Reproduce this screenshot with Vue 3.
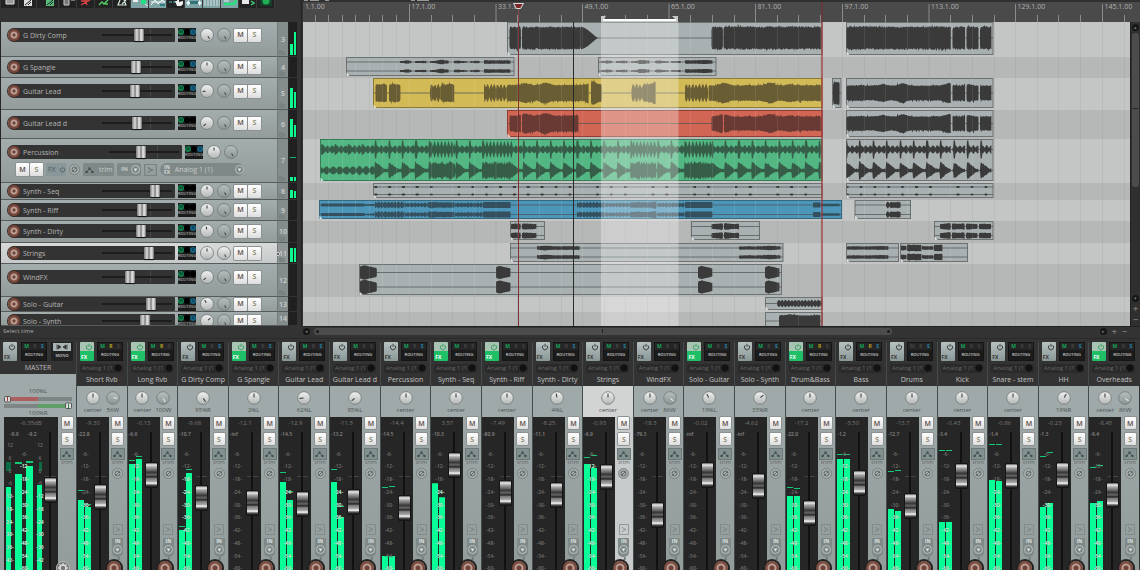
<script setup>
const tracks = [
  { n: 3, name: 'G Dirty Comp', h: 35, pad: 6, vol: 54, s: true, pan: 145, m: [22, 10], },
  { n: 4, name: 'G Spangle', h: 21, pad: 3, vol: 50, s: true, pan: 0 },
  { n: 5, name: 'Guitar Lead', h: 32, pad: 6, vol: 49, s: true, pan: -95, m: [10, 14] },
  { n: 6, name: 'Guitar Lead d', h: 29, pad: 6, vol: 51, s: false, pan: -130, m: [9, 15] },
  { n: 7, name: 'Percussion', h: 44, pad: 6, vol: 47, s: true, pan: 0, m: [38, 38], open: true, peak: 18 },
  { n: 8, name: 'Synth - Seq', h: 17, pad: 1, vol: 79, s: false, pan: 0, m: [7, 8] },
  { n: 9, name: 'Synth - Riff', h: 21, pad: 3, vol: 59, s: false, pan: 0 },
  { n: 10, name: 'Synth - Dirty', h: 22, pad: 3, vol: 57, s: true, pan: -10 },
  { n: 11, name: 'Strings', h: 21, pad: 3, vol: 70, s: true, pan: 0, m: [5, 5], sel: true },
  { n: 12, name: 'WindFX', h: 33, pad: 6, vol: 41, s: false, pan: -130 },
  { n: 13, name: 'Solo - Guitar', h: 15, pad: 0, vol: 72, s: true, pan: -30 },
  { n: 14, name: 'Solo - Synth', h: 14, pad: 2, vol: 63, s: true, pan: 50 },
]

const strips = [
  { name: 'Short Rvb', fx: 1, r: 'MR', pans: [[0, 'center'], [90, '56W']], vol: '-9.30', pk: '-22.8', f: 497, l: [500, 490], rt: [507, 504] },
  { name: 'Long Rvb', fx: 1, r: 'MR', pans: [[0, 'center'], [150, '100W']], vol: '-0.13', pk: '-6.6', f: 475, l: [464, 460], rt: [459, 456] },
  { name: 'G Dirty Comp', fx: 0, r: 'MS', pans: [[145, '95%R']], vol: '-9.68', pk: '-10.7', f: 498, l: [530, 526], rt: [473, 469] },
  { name: 'G Spangle', fx: 1, r: 'MS', pans: [[0, '2%L']], vol: '-12.1', pk: '-inf', f: 503 },
  { name: 'Guitar Lead', fx: 0, r: 'MS', pans: [[-95, '62%L']], vol: '-12.9', pk: '-14.5', f: 504, l: [482, 472], rt: [500, 491] },
  { name: 'Guitar Lead d', fx: 0, r: 'M', pans: [[-130, '85%L']], vol: '-11.5', pk: '-13.2', f: 502, l: [482, 469], rt: [517, 506] },
  { name: 'Percussion', fx: 0, r: 'MS', pans: [[0, 'center']], vol: '-14.4', pk: '-14.5', f: 508, l: [556, 487], rt: [556, 486] },
  { name: 'Synth - Seq', fx: 1, r: 'M', pans: [[0, 'center']], vol: '3.57', pk: '-10.3', f: 465, l: [483, 483], rt: [497, 497] },
  { name: 'Synth - Riff', fx: 1, r: 'M', pans: [[0, 'center']], vol: '-7.49', pk: '-80.9', f: 493 },
  { name: 'Synth - Dirty', fx: 0, r: 'MS', pans: [[-10, '4%L']], vol: '-8.25', pk: '-11.1', f: 495 },
  { name: 'Strings', fx: 0, r: 'MS', pans: [[0, 'center']], vol: '-0.93', pk: '-6.9', f: 477, l: [464, 457], rt: [468, 455], sel: true },
  { name: 'WindFX', fx: 0, r: 'M', pans: [[0, 'center'], [130, '86W']], vol: '-18.3', pk: '-79.3', f: 515 },
  { name: 'Solo - Guitar', fx: 1, r: 'MS', pans: [[-30, '19%L']], vol: '-0.02', pk: '-inf', f: 475 },
  { name: 'Solo - Synth', fx: 0, r: 'MS', pans: [[50, '33%R']], vol: '-4.62', pk: '-inf', f: 486 },
  { name: 'Drum&Bass', fx: 1, r: 'MR', pans: [[0, 'center']], vol: '-17.2', pk: '-22.0', f: 513, l: [496, 487], rt: [496, 488] },
  { name: 'Bass', fx: 0, r: 'MRS', pans: [[0, 'center']], vol: '-3.50', pk: '-1.2', f: 483, l: [459, 454], rt: [459, 454] },
  { name: 'Drums', fx: 0, r: 'S', pans: [[0, 'center']], vol: '-13.7', pk: '-12.7', f: 506, l: [509, 471], rt: [511, 470] },
  { name: 'Kick', fx: 0, r: 'M', pans: [[0, 'center']], vol: '-0.43', pk: '-3.4', f: 476, l: [522, 450], rt: [522, 450] },
  { name: 'Snare - stem', fx: 0, r: 'M', pans: [[0, 'center']], vol: '-0.86', pk: '-1.4', f: 476, l: [480, 444], rt: [481, 444] },
  { name: 'HH', fx: 0, r: 'MS', pans: [[30, '19%R']], vol: '-0.23', pk: '-1.3', f: 475, l: [507, 456], rt: [503, 452] },
  { name: 'Overheads', fx: 1, r: 'MS', pans: [[0, 'center'], [130, '86W']], vol: '-8.45', pk: '-9.4', f: 495, l: [503, 467], rt: [501, 465] },
]

const METER_TOP = 417
const scale = [6, 12, 18, 24, 30, 36, 42, 48, 54, 60].map((db, i) => ({ text: `-${db}-`, y: Math.round(453.5 + i * 12.77) - METER_TOP }))
const sideScale = ['12', '6', '0', '-6', '12', '18', '24', '30', '36', '42'].map((t, i) => ({ t, y: 28 + Math.round(i * 12.77) }))
const covered = (s, y) => s.l && y + METER_TOP >= Math.min(s.l[0], s.rt[0]) + 2

const AX = 303
const AW = 827
const pct = (x) => ((x - AX) / AW) * 100 + '%'
const majors = [409.5, 496, 582.5, 669, 755.5, 842.5, 929, 1015.5, 1102.5]
const labels = [[303, '1.1.00'], ...majors.map((x, i) => [x, `${17 + 16 * i}.1.00`])]
const minors = []
for (let i = 0; i < 7; i++) minors.push(315.5 + Math.round(i * 13.45))
majors.forEach((x) => [21.6, 43.3, 65].forEach((d) => x + d < 1130 && minors.push(Math.floor(x + d) + 0.5)))

const laneTop = [22]
tracks.forEach((t) => laneTop.push(laneTop[laneTop.length - 1] + t.h))

const rnd = (x) => {
  const v = Math.sin(x * 12.9898 + 4.1) * 43758.5453
  return v - Math.floor(v)
}
const busy = [[430, 455], [484, 512], [632, 656], [685, 712]]
const shapes = {
  solid: (x) => 0.78 + 0.14 * rnd(x) + (rnd(x + 9) > 0.93 ? 0.12 : 0),
  lumpy: (x) => 0.62 + 0.1 * rnd(x) + 0.28 * Math.pow(Math.abs(Math.sin(x / 7.1) * Math.cos(x / 19)), 3) + (rnd(x + 5) > 0.93 ? 0.16 : 0),
  pulse: (x) => 0.25 + 0.65 * Math.pow(Math.abs(Math.sin(x * 0.95)), 0.6) * (0.7 + 0.3 * rnd(x)),
  thin: (x) => 0.25 + 0.45 * Math.pow(Math.abs(Math.sin(x / 5.3)), 2) * rnd(x) + 0.25 * Math.abs(Math.cos(x / 13)),
  flat: () => 0.8,
  blob: (x, p) => (p < 0.25 ? 0.86 + p * 0.5 : 1 - (p - 0.25) * 0.55) + 0.06 * rnd(x),
  fade: (x, p) => Math.pow(Math.max(0, 1 - p * p), 0.9) * Math.pow(1 - p, 0.4),
  kit: (x) => {
    const p = ((x - 321) % 13.45) / 13.45
    const dense = busy.some(([a, b]) => x > a && x < b)
    if (dense) return 0.3 + 0.6 * Math.pow(Math.abs(Math.sin(x * 0.9)), 2)
    const hit = x > 372 ? (p < 0.14 ? 0.95 : 0) : (p < 0.14 ? 0.55 : 0)
    return Math.max(hit, 0.16 + 0.32 * Math.abs(Math.sin(p * 9.4)) * (0.6 + 0.4 * rnd(x)))
  },
  kick: (x) => {
    if (x < 374) return 0.15 + 0.35 * Math.abs(Math.sin(x / 2.1)) * (0.6 + 0.4 * rnd(x))
    const dense = busy.some(([a, b]) => x > a && x < b)
    const p = ((x - 321) % 13.45) / 13.45
    return dense ? 0.6 + 0.4 * rnd(x) : Math.max(0.12 + 0.1 * rnd(x), (1 - p * 1.15) * (0.8 + 0.25 * rnd(x)))
  },
  dots: (x) => (((x * 0.97) % 13.45) < 2.6 && rnd(Math.floor(x / 13.45)) > 0.2 ? 1 : 0.12),
}
function wave([x1, x2, amp, kind], cy, sub) {
  const top = []
  const bot = []
  for (let x = x1; x <= x2; x += 0.6) {
    const p = (x - x1) / (x2 - x1)
    const edge = Math.min(1, 0.75 + (x - x1) / 2, 0.7 + (x2 - x) / 1.5)
    const k = kind === 'kit' && sub ? 'kick' : kind
    const a = amp * shapes[k](x, p) * (k === 'fade' ? 1 : edge)
    const b = amp * shapes[k](x + (k === 'solid' || k === 'lumpy' ? 0.3 : 0), p) * (k === 'fade' ? 1 : edge)
    top.push(`${x.toFixed(1)} ${(cy - a).toFixed(1)}`)
    bot.unshift(`${x.toFixed(1)} ${(cy + b).toFixed(1)}`)
  }
  return 'M' + top.concat(bot).join('L') + 'Z'
}
const G = 'grey'
const tail = (amp, kind) => [[846.5, 951.5, amp, kind], [952.5, 965.5, amp, kind], [966.5, 978.8, amp, kind], [980, 992, amp, kind]]
const spangle = (o, end) => [[o, o + 12, 2, 'thin'], [o + 15, o + 27, 2, 'thin'], [o + 30, o + 49, 2.8, 'thin'], [o + 54, o + 68, 2, 'thin'], [o + 70, o + 80, 2, 'thin'], [o + 84, end, 2.5, 'lumpy']]
const riff = [[321, 365, 1.8, 'flat'], [365, 375, 1.6, 'thin'], [375, 405, 4, 'pulse'], [405, 428, 2.8, 'pulse'], [428, 455, 3.8, 'lumpy'], [455, 483, 3, 'pulse'], [483, 511, 3.6, 'flat'], [577, 605, 3.6, 'pulse'], [605, 630, 2.8, 'pulse'], [630, 657, 3.8, 'lumpy'], [657, 685, 2.8, 'pulse'], [685, 713, 3.6, 'flat'], [813, 821, 3.2, 'flat'], [821, 840, 1.6, 'flat']]
const clips = [
  { x: 507.5, e: 822, y: 22.5, b: 54.5, c: G, cy: [38], w: [[509.5, 521, 13, 'solid'], [522, 581, 13, 'solid'], [581, 598, 11.5, 'fade'], [711.5, 723, 13, 'solid'], [723.5, 821.5, 13, 'solid']] },
  { x: 846.5, e: 993, y: 22.5, b: 54.5, c: G, cy: [38], w: tail(13, 'solid') },
  { x: 346.5, e: 514, y: 57.5, b: 75.5, c: G, cy: [62, 71], w: spangle(400, 511) },
  { x: 598.5, e: 716, y: 57.5, b: 75.5, c: G, cy: [62, 71], w: spangle(601, 713) },
  { x: 373.5, e: 822, y: 78.5, b: 107.5, c: 'yellow', cy: [93], w: [[375.5, 387, 13, 'lumpy'], [389, 400.5, 13, 'lumpy'], [430, 441, 11, 'pulse'], [441, 454.5, 13, 'lumpy'], [484, 507, 11, 'pulse'], [507, 589, 12, 'lumpy'], [591, 602, 13, 'lumpy'], [631.5, 643, 11, 'pulse'], [643, 656, 13, 'lumpy'], [685, 709, 11, 'pulse'], [709, 821.5, 11.5, 'lumpy']] },
  { x: 832.5, e: 841, y: 78.5, b: 107.5, c: G, cy: [93], w: [[833, 840, 12, 'lumpy']] },
  { x: 846.5, e: 993, y: 78.5, b: 107.5, c: G, cy: [93], w: tail(11, 'lumpy') },
  { x: 507.5, e: 822, y: 110.5, b: 136.5, c: 'red', cy: [123.5], w: [[509.5, 521.5, 12, 'lumpy'], [522, 579, 12, 'lumpy'], [711.5, 723, 11, 'lumpy'], [724, 821.5, 10.5, 'lumpy']] },
  { x: 846.5, e: 993, y: 110.5, b: 136.5, c: G, cy: [123.5], w: tail(10.5, 'lumpy') },
  { x: 320.5, e: 822, y: 139.5, b: 180.5, c: 'green', cy: [149.5, 170.5], w: [[321, 821.5, 9.5, 'kit']] },
  { x: 846.5, e: 993, y: 139.5, b: 180.5, c: G, cy: [149.5, 170.5], w: tail(9.5, 'kit') },
  { x: 373.5, e: 822, y: 183.5, b: 197.5, c: G, cy: [187, 194.5], w: [[374, 821, 1, 'dots']] },
  { x: 846.5, e: 993, y: 183.5, b: 197.5, c: G, cy: [187, 194.5], w: [[847, 992, 1, 'dots']] },
  { x: 319.5, e: 841.5, y: 200.5, b: 218.5, c: 'blue', cy: [205, 214.5], w: riff },
  { x: 855, e: 910.5, y: 200.5, b: 218.5, c: G, cy: [205, 214.5], w: [[886, 901, 4, 'pulse'], [891, 901, 3.4, 'flat']] },
  { x: 510.5, e: 544.5, y: 221.5, b: 239.5, c: G, cy: [226.5, 235.5], w: [[511, 521, 4, 'lumpy'], [522, 537, 3.6, 'lumpy']] },
  { x: 691.5, e: 759.5, y: 221.5, b: 239.5, c: G, cy: [226.5, 235.5], w: [[711.5, 723, 3.8, 'lumpy'], [724, 739.5, 3.8, 'lumpy']] },
  { x: 934.5, e: 993, y: 221.5, b: 239.5, c: G, cy: [226.5, 235.5], w: [[940, 951, 3.6, 'lumpy'], [952, 965, 4, 'lumpy'], [966, 978, 3.6, 'lumpy'], [979, 991.5, 4, 'lumpy']] },
  { x: 510.5, e: 783, y: 243.5, b: 261.5, c: G, cy: [248, 257], w: [[537, 580, 2.6, 'lumpy'], [739, 781, 2.4, 'lumpy']] },
  { x: 846.5, e: 898.5, y: 243.5, b: 261.5, c: G, cy: [248, 257], w: [[847, 889, 2.4, 'lumpy']] },
  { x: 900.5, e: 967.5, y: 243.5, b: 261.5, c: G, cy: [248, 257], w: [[901, 907, 2.6, 'lumpy'], [907, 922, 4.6, 'lumpy'], [922, 934, 2.6, 'lumpy'], [934, 943, 4.6, 'lumpy']] },
  { x: 359.5, e: 781.5, y: 264.5, b: 294.5, c: G, cy: [272.5, 287], w: [[360, 377, 7, 'blob'], [496, 511, 6.4, 'blob'], [698, 713, 6.4, 'blob'], [765, 780, 6.4, 'blob']] },
  { x: 765.5, e: 822, y: 297.5, b: 309.5, c: G, cy: [303.5], w: [[777, 822, 4.4, 'pulse'], [777, 822, 2.6, 'lumpy']] },
  { x: 765.5, e: 822, y: 312.5, b: 330, c: G, cy: [321], w: [[779, 821, 8.5, 'lumpy']] },
].map((c) => ({ ...c, d: c.cy.map((y, i) => c.w.map((w) => wave(w, y, i)).join('')).join('') }))

const tools = ['stop', 'sheet', 'gap', 'sheetg', 'page', 'cutr', 'cutg', 'metro', 'on:group', 'on:env', 'hand', 'on:loop', 'on:grid', 'on:snap', 'lock', 'glow']
const toolIcon = (t) => t.replace('on:', '')
const px = (v) => v + 'px'
</script>

<template>
  <div class="daw">
    <svg class="defs" aria-hidden="true">
      <defs>
        <linearGradient id="kg" x1="0" y1="0" x2="0" y2="1"><stop offset="0" stop-color="#f2f3f2" /><stop offset="1" stop-color="#b2b6b5" /></linearGradient>
        <linearGradient id="kd" x1="0" y1="0" x2="0" y2="1"><stop offset="0" stop-color="#b7bfbf" /><stop offset="1" stop-color="#8b9493" /></linearGradient>
      </defs>
      <symbol id="i-stop" viewBox="0 0 18 9"><path d="M5 0v4h8V0" fill="#999" stroke="#ddd" /></symbol>
      <symbol id="i-sheet" viewBox="0 0 18 9"><path d="M5 0h8v6H5z" fill="#ddd" /><path d="M6 5l6-5M9 5l3-3" stroke="#222" /></symbol>
      <symbol id="i-sheetg" viewBox="0 0 18 9"><path d="M5 0h8v6H5z" fill="#58bb78" /><path d="M6 5l6-5M9 5l3-3" stroke="#123" /></symbol>
      <symbol id="i-page" viewBox="0 0 18 9"><path d="M5 0v5h5V0M12 0h4" fill="#777" stroke="#ccc" /></symbol>
      <symbol id="i-cutr" viewBox="0 0 18 9"><path d="M4 5l9-5M4 1h7M8 0l2 5" stroke="#d44" stroke-width="1.4" fill="none" /></symbol>
      <symbol id="i-cutg" viewBox="0 0 18 9"><path d="M4 5l3-3 2 2 4-4M10 4l3 0" stroke="#5c6" stroke-width="1.4" fill="none" /></symbol>
      <symbol id="i-metro" viewBox="0 0 18 9"><path d="M7 0L5 5h8L11 0M9 4l4-4" stroke="#d5e8d8" stroke-width="1.2" fill="none" /></symbol>
      <symbol id="i-group" viewBox="0 0 18 9"><path d="M2 0h5v2H2z" fill="#eee" /><path d="M6 1l4 3V0h5v4h-5" fill="#1fe083" /><path d="M14 4l3 2" stroke="#eee" /></symbol>
      <symbol id="i-env" viewBox="0 0 18 9"><path d="M2 5l4-5 3 4 4-4 3 2M2 2h14" stroke="#f4f8f8" fill="none" /><path d="M11 4h5v2h-5z" fill="#2e7d83" /></symbol>
      <symbol id="i-hand" viewBox="0 0 18 9"><path d="M2 1h3v2H2zM6 1h3v2H6z" fill="#356e73" /><path d="M8 1h2V0h2v2l4-1v3l-2 2h-4z" fill="#eee" /></symbol>
      <symbol id="i-loop" viewBox="0 0 18 9"><path d="M1 3l3-3v2h10V0l3 3-3 3V4H4v2z" fill="#e8f4f4" /><path d="M5 1h8v3H5z" fill="#2d7579" /></symbol>
      <symbol id="i-grid" viewBox="0 0 18 9"><path d="M2 0v6M5 0v6M8 0v6M11 0v6M14 0v6M17 0v6" stroke="#d9e4e4" /></symbol>
      <symbol id="i-snap" viewBox="0 0 18 9"><path d="M3 4h8q4 0 4-4" stroke="#25e27f" stroke-width="2.4" fill="none" /><path d="M3 1h5" stroke="#e6f2ee" /></symbol>
      <symbol id="i-lock" viewBox="0 0 18 9"><path d="M3 0h7v4H3z" fill="#e8e8e8" /><path d="M12 1l3 2-3 2" stroke="#3fce75" stroke-width="1.5" fill="none" /></symbol>
      <symbol id="i-glow" viewBox="0 0 18 9"><path d="M3 0h12v6H3z" fill="#173e26" /><circle cx="9" cy="1" r="3.5" fill="#20b055" /></symbol>
      <symbol id="i-env2" viewBox="0 0 11 10"><path d="M2.5 7L5.5 3.5 8.5 7" stroke="#39494b" fill="none" stroke-width=".8" /><path d="M1.5 6h2v2h-2zM4.5 2.500h2v2h-2zM7.500 6h2v2h-2z" fill="#39494b" /></symbol>
      <symbol id="i-phase" viewBox="0 0 11 11"><circle cx="5.5" cy="5.5" r="5" fill="#a9b0af" stroke="#6f7877" stroke-width=".8" /><circle cx="5.5" cy="5.5" r="2.5" fill="none" stroke="#555c5c" stroke-width=".9" /><path d="M3.3 7.700L7.700 3.300" stroke="#555c5c" stroke-width=".8" /></symbol>
      <symbol id="i-ifx" viewBox="0 0 10 11"><path d="M.5.5h9v10h-9z" fill="none" stroke="#7a8483" /><path d="M3 3q1 2 4 2.500Q4 6 3 8" fill="none" stroke="#707978" /></symbol>
      <symbol id="i-power" viewBox="0 0 8 8"><path d="M2.400 2.200a2.600 2.600 0 1 0 3.200 0M4 .8v3" fill="none" stroke="currentColor" stroke-width=".9" /></symbol>
      <symbol id="i-folder" viewBox="0 0 6 5"><path d="M.5.5h2l.5 1h2.500v3h-5z" fill="#7a8382" stroke="#6f7877" stroke-width=".5" /></symbol>
      <symbol id="i-drop" viewBox="0 0 9 9"><circle cx="4.5" cy="4.5" r="4" fill="#7c8685" stroke="#ccd1d0" stroke-width=".8" /><path d="M2.600 3.500h3.800L4.500 6.500z" fill="#e0e4e3" /></symbol>
      <symbol id="i-gear" viewBox="0 0 14 14"><circle cx="7" cy="7" r="6.500" fill="#777" stroke="#bbb" /><circle cx="7" cy="7" r="3" fill="#777" stroke="#ddd" stroke-width="1.500" /><path d="M7 2v2M7 10v2M2 7h2M10 7h2M3.500 3.500l1.500 1.500M9 9l1.500 1.500M10.500 3.500L9 5M3.500 10.500L5 9" stroke="#ddd" stroke-width="1.300" /></symbol>
    </svg>

    <main class="arrange">
      <section class="side" aria-label="Track panel">
        <div class="toolbar">
          <template v-for="(t, i) in tools" :key="i">
            <span v-if="t === 'gap'" class="tgap"></span>
            <button v-else class="tool" :class="{ on: t.startsWith('on:') }" :aria-label="toolIcon(t)"><svg width="18" height="9"><use :href="'#i-' + toolIcon(t)" /></svg></button>
          </template>
        </div>
        <article v-for="t in tracks" :key="t.n" class="track" :class="{ sel: t.sel, open: t.open }" :style="{ height: px(t.h) }">
          <div class="tbody" :style="{ paddingTop: px(t.pad) }">
            <div class="tline">
              <div class="namebox">
                <button class="rec" :aria-label="'Arm ' + t.name"></button>
                <span class="tname">{{ t.name }}</span>
                <input type="range" class="hfader" min="0" max="100" :value="t.vol" :aria-label="t.name + ' volume'" />
              </div>
              <button class="route" :aria-label="t.name + ' routing'">
                <span class="dots"><i class="dm">M</i><i></i><i :class="{ ds: t.s }">{{ t.s ? 'S' : '' }}</i></span>
                <span class="rt">ROUTING</span>
              </button>
              <svg class="knob" viewBox="0 0 14 14" role="img" aria-label="Pan"><circle cx="7" cy="7" r="6.5" fill="url(#kg)" stroke="#6f7776" stroke-width=".8" /><path d="M7 2.500V5.500" stroke="#333" :transform="`rotate(${t.pan} 7 7)`" /></svg>
              <svg class="knob" viewBox="0 0 14 14" role="img" aria-label="Width"><circle cx="7" cy="7" r="6.5" :fill="t.sel ? 'url(#kg)' : 'url(#kd)'" stroke="#6f7776" stroke-width=".8" /><path d="M7 2.500V5.500" stroke="#444" transform="rotate(155 7 7)" /></svg>
              <div v-if="!t.open" class="ms"><button class="mb">M</button><button class="sb">S</button></div>
            </div>
            <div v-if="t.open" class="tline2">
              <div class="ms"><button class="mb">M</button><button class="sb">S</button></div>
              <button class="pill fxp">FX <svg width="7" height="7"><use href="#i-power" /></svg></button>
              <svg width="11" height="11"><use href="#i-phase" /></svg>
              <button class="pill trimp"><svg width="11" height="10"><use href="#i-env2" /></svg><span>trim</span></button>
              <button class="pill inp">IN <svg width="9" height="9"><use href="#i-drop" /></svg></button>
              <svg width="13" height="12" viewBox="0 0 10 11" preserveAspectRatio="none"><use href="#i-ifx" /></svg>
              <div class="pill anp"><span class="infx">IN<br />FX</span><select aria-label="Input"><option>Analog 1 (1)</option></select><svg width="9" height="9"><use href="#i-drop" /></svg></div>
            </div>
          </div>
          <div class="tnum"><span>{{ t.n }}</span><svg v-if="t.h > 16" class="fold" width="6" height="5"><use href="#i-folder" /></svg></div>
          <div class="tmeter">
            <template v-if="t.m">
              <i v-for="(m, k) in t.m" :key="k" :style="{ marginTop: px(m) }"></i>
              <b v-if="t.peak" :style="{ top: px(t.peak) }"></b>
            </template>
          </div>
        </article>
      </section>

      <section class="timeline" aria-label="Arrangement">
        <div class="ruler">
          <div class="rinner">
            <svg viewBox="303 0 827 22" preserveAspectRatio="none">
              <path d="M304 0h4v1h-4zM310 0h9v1h-9zM325 0h4v1h-4zM411 0h4v1h-4zM417 0h12v1h-12z" fill="#999" />
              <path v-for="x in majors" :key="x" :d="`M${x} 4v18`" stroke="#8b8b8b" />
              <path v-for="x in minors" :key="x" :d="`M${x} 15v7`" stroke="#8b8b8b" />
              <path d="M601 16h5l-3 4h73l-4-4h6v6h-77z" fill="#c6c8c7" /><path d="M603 19h73v2h-73z" fill="#fff" />
              <path d="M822 2v20" stroke="#7a2a2a" />
            </svg>
            <span v-for="l in labels" :key="l[1]" class="rl" :style="{ left: pct(l[0]) }">{{ l[1] }}</span>
            <svg class="edit" :style="{ left: pct(513) }" width="11" height="22" viewBox="513 0 11 22"><path d="M518.500 8v14" stroke="#8d4a4a" /><path d="M513.500 3.500h10l-3 5h-4z" fill="#7c2626" stroke="#ddd" /></svg>
          </div>
        </div>
        <svg class="canvas" viewBox="303 22 827 304" preserveAspectRatio="none">
          <rect v-for="(t, i) in tracks" :key="t.n" x="303" :y="laneTop[i]" width="827" :height="t.h" :fill="i % 2 ? '#b6b8b7' : '#c4c6c5'" />
          <path v-for="x in majors.concat(minors)" :key="x" :d="`M${x} 22V326`" stroke="#000" stroke-opacity=".08" />
          <g v-for="(c, i) in clips" :key="i" :class="'c-' + c.c">
            <rect class="cb" :x="c.x" :y="c.y" :width="c.e - c.x" :height="c.b - c.y" />
            <path v-for="y in c.cy" :key="y" class="cl" :d="`M${c.x} ${y}H${c.e}`" />
            <path class="cw" :d="c.d" />
            <path :d="`M${c.x} ${c.b - 3}l3 3.500h-3z`" fill="#fff" fill-opacity=".75" />
          </g>
          <path v-for="x in majors.concat(minors)" :key="'o' + x" :d="`M${x} 22V326`" stroke="#fff" stroke-opacity=".09" />
          <rect x="601" y="22" width="77.500" height="304" fill="#fff" fill-opacity=".3" />
          <path d="M518.500 22V326" stroke="#7e2f2f" />
          <path d="M573.500 22V326" stroke="#2a2a2a" />
          <path d="M822 22V326" stroke="#a03030" stroke-width="1.200" />
        </svg>
      </section>
      <div class="vscroll">
        <i class="dot">▴</i><span class="vthumb"></span><i class="dot">▾</i><b>+</b><b>−</b>
      </div>
    </main>

    <div class="status">
      <span class="msg">Select time</span>
      <div class="hscroll"><i class="dot">◂</i><span class="hthumb"><i></i><u></u><i></i></span><span class="hend"><i class="dot">▸</i><b>+</b><b>−</b></span></div>
    </div>

    <section class="mixer" aria-label="Mixer">
      <article class="master">
        <div class="mhead">
          <button class="fx" aria-label="Master FX"><svg width="8" height="8"><use href="#i-power" /></svg><span>FX</span></button>
          <button class="routing"><span class="mrs"><i class="M">M</i><i>R</i><i class="S">S</i></span><span class="rtx">ROUTING</span></button>
          <button class="mono"><svg width="18" height="8" viewBox="0 0 18 8"><path d="M0 0h18v8H0z" fill="#a9b5b5" /><path d="M4 1.500v5M14 1.500v5M5 2l3 2-3 2zM13 2l-3 2 3 2z" stroke="#333" stroke-width=".8" fill="#333" /></svg><span>MONO</span></button>
        </div>
        <h2 class="mtitle">MASTER</h2>
        <div class="mpan">
          <span>100%L</span>
          <svg viewBox="0 0 68 13" height="13" preserveAspectRatio="none"><path d="M0 1h68v4H0zM0 8h68v4H0z" fill="#7d8685" /><path d="M5 1h29v4H5z" fill="#a9605e" /><path d="M34 8h29v4H34z" fill="#5f9e66" /><rect x=".5" y=".5" width="6" height="5.500" rx="1" fill="#ddd" stroke="#555" /><path d="M3.500 1v4" stroke="#a33" /><rect x="61.500" y="7" width="6" height="5.500" rx="1" fill="#ddd" stroke="#555" /><path d="M64.500 8v4" stroke="#384" /></svg>
          <span>100%R</span>
        </div>
        <div class="body">
          <div class="well">
            <span class="vol">-6.35dB</span>
            <span class="pk">-9.9</span><span class="pk pk2">-9.2</span>
            <i class="bar b1" :style="{ top: px(70) }"></i><i class="bar b2" :style="{ top: px(57) }"></i><i class="bar b3" :style="{ top: px(49) }"></i><i class="bar b4" :style="{ top: px(68) }"></i>
            <i class="led l1"></i><i class="led l2"></i>
            <i class="peak b2" :style="{ top: px(45) }"></i><i class="peak b3" :style="{ top: px(44) }"></i>
            <span v-for="s in scale" :key="s.y" class="sc" :class="{ lit: s.y > 46 }" :style="{ top: px(s.y - 4) }">{{ s.text }}</span>
            <template v-for="s in sideScale" :key="'s' + s.y">
              <span class="sc scl" :class="{ lit: s.y > 70 }" :style="{ top: px(s.y - 4) }">{{ s.t }}{{ s.y > 70 ? '-' : '' }}</span>
              <span class="sc scr" :class="{ lit: s.y > 70 }" :style="{ top: px(s.y - 4) }">{{ s.y > 70 ? '-' : '' }}{{ s.t }}</span>
            </template>
            <input type="range" class="vfader" min="443" max="565" value="490" aria-label="Master volume" />
          </div>
          <div class="col">
            <button class="mb">M</button><button class="sb">S</button>
            <button class="envb" aria-label="Envelope"><svg width="11" height="10"><use href="#i-env2" /></svg></button><span class="trim">trim</span>
          </div>
          <svg class="gear" width="14" height="14"><use href="#i-gear" /></svg>
        </div>
      </article>

      <div class="strips">
        <article v-for="s in strips" :key="s.name" class="strip" :class="{ sel: s.sel }">
          <div class="head">
            <button class="fx" :class="{ on: s.fx }" :aria-label="s.name + ' FX'"><svg width="8" height="8"><use href="#i-power" /></svg><span>FX</span></button>
            <button class="routing"><span class="mrs"><i v-for="c in 'MRS'" :key="c" :class="{ [c]: s.r.includes(c) }">{{ c }}</i></span><span class="rtx">ROUTING</span></button>
          </div>
          <div class="inrow"><select :aria-label="s.name + ' input'"><option>Analog 1 (1</option></select></div>
          <h2>{{ s.name }}</h2>
          <div class="pans">
            <div v-for="p in s.pans" :key="p[1]" class="pan">
              <svg class="knob" viewBox="0 0 14 14" role="img" :aria-label="s.name + ' pan'"><circle cx="7" cy="7" r="6.3" :fill="p[1].endsWith('W') ? 'url(#kd)' : 'url(#kg)'" stroke="#6f7776" stroke-width=".8" /><path d="M7 2.500V6.500" :stroke="p[1].endsWith('W') ? '#eee' : '#333'" :transform="`rotate(${p[0]} 7 7)`" /></svg>
              <span>{{ p[1] }}</span>
            </div>
          </div>
          <div class="body">
            <div class="well">
              <span class="vol">{{ s.vol }}</span><span class="pk">{{ s.pk }}</span>
              <template v-if="s.l">
                <i class="bar bl" :style="{ top: px(s.l[0] - METER_TOP) }"></i><i class="bar br" :style="{ top: px(s.rt[0] - METER_TOP) }"></i>
                <i class="peak bl" :style="{ top: px(s.l[1] - METER_TOP) }"></i><i class="peak br" :style="{ top: px(s.rt[1] - METER_TOP) }"></i>
              </template>
              <span v-for="k in scale" :key="k.y" class="sc" :class="{ lit: covered(s, k.y) }" :style="{ top: px(k.y - 4) }">{{ k.text }}</span>
              <input type="range" class="vfader" min="443" max="565" :value="s.f" :aria-label="s.name + ' volume'" />
            </div>
            <div class="col">
              <button class="mb">M</button><button class="sb">S</button>
              <button class="envb" aria-label="Envelope"><svg width="11" height="10"><use href="#i-env2" /></svg></button><span class="trim">trim</span>
              <svg class="phase" width="11" height="11"><use href="#i-phase" /></svg>
              <svg class="ifx" width="10" height="11"><use href="#i-ifx" /></svg>
              <button class="inb">IN<svg width="9" height="9"><use href="#i-drop" /></svg></button>
              <svg width="6" height="6" viewBox="0 0 6 6"><path d="M4 0v2L2 4v2" stroke="#6d7675" stroke-width="1.500" fill="none" /></svg>
            </div>
            <button class="rec big" :aria-label="'Arm ' + s.name"></button>
          </div>
        </article>
      </div>
    </section>
  </div>
</template>

<style>
html, body { margin: 0; background: #333; }
</style>

<style scoped>
.daw { height: 100vh; overflow: hidden; display: flex; flex-direction: column; background: #333; font: 7px/9px "Open Sans", "Noto Sans", sans-serif; color: #aaa; }
.daw * { box-sizing: border-box; }
.defs { position: absolute; width: 0; height: 0; }
button, select { font: inherit; border: 0; padding: 0; margin: 0; color: inherit; background: none; }
i, u { font-style: normal; text-decoration: none; }
h2 { margin: 0; font-weight: 400; font-size: 7px; line-height: 9px; }
svg { display: block; flex: none; }

.arrange { display: flex; flex: none; }
.side { width: 302px; flex: none; border-right: 1px solid #222; height: 326px; overflow: hidden; }
.toolbar { height: 22px; padding-left: 1px; display: flex; align-items: flex-start; }
.tool { width: 18px; height: 8px; overflow: hidden; background: #222; border-right: 1px solid #3a3a3a; }
.tool.on { background: #7fa3a5; }
.tgap { width: 4px; height: 8px; background: #222; }

.track { display: flex; width: 297px; overflow: hidden; background: #262626; }
.tbody { width: 276px; margin-left: 1px; background: linear-gradient(#a3adad, #939c9b); border-bottom: 1px solid #555c5b; overflow: hidden; }
.sel .tbody { background: linear-gradient(#d8dada, #c6c9c9); }
.tline { display: flex; align-items: center; height: 14px; padding-left: 8px; }
.namebox { width: 166px; height: 14px; background: #333; display: flex; align-items: center; margin-right: 3px; border-radius: 6px 1px 1px 6px; flex: none; }
.open .namebox { width: 173px; }
.rec { width: 12px; height: 12px; border-radius: 50%; background: radial-gradient(circle, #6e4236 0 1px, #b99c92 2px 3px, #76473a 4px); box-shadow: 0 0 0 1px #3a2a26; margin-left: -1px; flex: none; }
.tname { margin-left: 3px; flex: 1; color: #b5b5b5; white-space: nowrap; }
.hfader { appearance: none; width: 76px; height: 14px; margin: 0 1px 0 0; background: linear-gradient(#1d1d1d, #1d1d1d) 4px 6px / 70px 2px no-repeat, linear-gradient(#484848, #484848) 52px 1px / 1px 12px no-repeat; outline: 0; }
.hfader::-webkit-slider-thumb { appearance: none; width: 10px; height: 12px; border-radius: 1px; background: linear-gradient(90deg, #777, #ddd 30%, #999 45%, #333 50%, #ccc 58%, #ddd 80%, #666); box-shadow: 0 1px 1px #111; }
.route { width: 18px; height: 14px; background: #1c1c1c; display: flex; flex-direction: column; align-items: center; overflow: hidden; flex: none; margin-right: 4px; }
.dots { display: flex; gap: 0; height: 7px; padding-top: 1px; }
.dots i { width: 6px; height: 6px; border-radius: 50%; background: #000; font-size: 4px; line-height: 6px; text-align: center; color: #012; }
.dots .dm { background: #12804a; }
.dots .ds { background: #16607f; }
.rt { font-size: 4px; line-height: 6px; font-weight: 600; color: #aaa; }
.knob { width: 14px; height: 14px; margin-right: 3px; }
.ms { display: flex; gap: 1px; }
.mb, .sb { width: 13px; height: 13px; background: linear-gradient(#fff, #dedede); border-radius: 1px; color: #5a4a46; font-size: 7px; line-height: 12px; font-weight: 600; text-align: center; box-shadow: 0 0 0 1px #8b9291; }
.sb { color: #7b7d58; }
.tline2 { display: flex; align-items: center; gap: 3px; height: 13px; padding-left: 15px; margin-top: 4px; }
.pill { background: #7f8988; height: 13px; display: flex; align-items: center; color: #c6cbca; border-radius: 1px; gap: 2px; }
.fxp { width: 20px; padding-left: 2px; color: #4e5859; background: #87979a; gap: 3px; }
.trimp { width: 31px; padding-left: 1px; gap: 4px; }
.inp { width: 24px; padding-left: 4px; border-radius: 2px; font-weight: 700; font-size: 6px; gap: 3px; }
.anp { width: 84px; border-radius: 7px; padding-left: 4px; }
.anp select { appearance: none; width: 60px; height: 12px; line-height: 12px; }
.infx { font-size: 5px; line-height: 5px; width: 9px; color: #d5dada; font-weight: 700; }
.tnum { width: 11px; background: #848d8c; border-bottom: 1px solid #555c5b; border-left: 1px solid #737b7a; color: #cdd1d0; display: flex; flex-direction: column; align-items: center; justify-content: center; position: relative; font-weight: 600; margin-right: 1px; }
.sel .tnum { background: #8f9695; }
.sel .tnum::before { content: ""; position: absolute; left: -2px; top: 9px; width: 2px; height: 2px; border: 1px solid #ddd; border-radius: 50%; background: #333; box-sizing: content-box; }
.fold { position: absolute; bottom: 1px; right: 3px; }
.tmeter { width: 8px; background: #202020; display: flex; gap: 1px; padding: 0 1px; border-bottom: 1px solid #333; position: relative; }
.tmeter i { flex: 1; background: #0cfa90; margin-bottom: 1px; }
.tmeter b { position: absolute; left: 1px; right: 1px; height: 1px; background: #0cb870; }

.timeline { flex: 1; min-width: 0; margin-left: 1px; }
.ruler { height: 22px; background: linear-gradient(#303030 2px, #4a4a4a 2px); margin-right: -10px; padding-right: 10px; }
.rinner { position: relative; }
.rinner > svg, .canvas { width: 100%; }
.rinner > svg { height: 22px; }
.rinner > .edit { position: absolute; top: 0; width: 11px; }
.canvas { height: 304px; }
.rl { position: absolute; top: 2px; padding-left: 2px; color: #b2b2b2; }
.cb { fill: #a9b0b1; stroke: #6c7172; }
.cl { stroke: #4b4f50; stroke-width: 0.7; }
.cw { fill: #3a3a3a; }
.c-yellow .cb { fill: #d2ba57; stroke: #8d7c35; }
.c-yellow .cw { fill: #695d34; }
.c-red .cb { fill: #d26655; stroke: #8d3f34; }
.c-red .cw { fill: #693a34; }
.c-green .cb { fill: #52b782; stroke: #357d58; }
.c-green .cw { fill: #355d48; }
.c-blue .cb { fill: #4c97b9; stroke: #34687f; }
.c-blue .cw { fill: #34505e; }
.vscroll { width: 10px; background: #2f2f2f; border-left: 1px solid #222; margin-top: 22px; padding-top: 2px; display: flex; flex-direction: column; align-items: center; gap: 2px; font-size: 6px; line-height: 8px; }
.dot { width: 7px; height: 7px; border-radius: 50%; background: #161616; color: #777; font-size: 5px; line-height: 7px; text-align: center; flex: none; display: block; }
.vthumb { width: 7px; height: 154px; background: #4c4c4c; border-radius: 3px; margin-bottom: 106px; flex: none; background-image: linear-gradient(#222, #222); background-size: 5px 1px; background-repeat: no-repeat; background-position: 1px 75px; }
.vscroll b, .hend b { font-size: 9px; line-height: 9px; color: #777; }

.status { flex: none; height: 12px; display: flex; }
.msg { width: 303px; padding-left: 3px; font-size: 6px; line-height: 10px; }
.hscroll { flex: 1; display: flex; align-items: center; height: 9px; gap: 4px; border-top: 1px solid #222; }
.hthumb { width: 69%; height: 7px; background: #4c4c4c; border-radius: 3px; display: flex; align-items: center; justify-content: space-between; padding: 0 2px; }
.hthumb i { width: 3px; height: 3px; border-radius: 50%; background: #1a1a1a; }
.hthumb u { width: 1px; height: 4px; background: #222; }
.hend { margin-left: auto; display: flex; gap: 5px; align-items: center; padding-right: 13px; }

.mixer { flex: none; height: 240px; display: flex; padding-top: 3px; border-top: 1px solid #2a2a2a; }
.master { width: 76px; flex: none; }
.mhead { display: flex; gap: 3px; padding-left: 3px; height: 21px; }
.mhead .routing { margin: 0 1px; }
.fx { width: 14px; height: 19px; background: linear-gradient(#b7c2c2, #8a9797); color: #333; display: flex; flex-direction: column; align-items: flex-end; justify-content: space-between; font-size: 5px; line-height: 6px; font-weight: 700; border-radius: 1px; flex: none; padding: 1px; }
.fx span { align-self: flex-start; }
.fx.on { background: linear-gradient(#a8c4b2 45%, #1fbf68 45%); color: #2d9c5c; }
.fx.on span { color: #fff; }
.routing { width: 26px; height: 19px; background: #1b1b1b; border: 1px solid #151515; flex: none; display: flex; flex-direction: column; align-items: center; }
.mrs { display: flex; justify-content: space-around; width: 100%; height: 8px; font-size: 5px; line-height: 7px; font-weight: 700; color: #444; background: #262626; }
.mrs .M { color: #14a45a; }
.mrs .R { color: #b9a51c; }
.mrs .S { color: #2286b0; }
.rtx { font-size: 4px; line-height: 10px; font-weight: 600; color: #ccc; }
.mono { width: 22px; height: 19px; background: #222; display: flex; flex-direction: column; align-items: center; padding-top: 1px; font-size: 4px; line-height: 9px; font-weight: 600; color: #ccc; }
.mtitle { text-align: center; height: 11px; color: #bbb; }
.mpan { height: 43px; background: #a0a9a9; display: flex; flex-direction: column; align-items: center; padding-top: 13px; color: #4a5352; font-size: 6px; line-height: 8px; }
.mpan svg { width: 68px; margin-top: 1px; }

.strips { flex: 1; display: grid; grid-template-columns: repeat(21, minmax(0, 1fr)); padding-right: 1px; }
.strip { border-left: 1px solid #444b4b; min-width: 0; }
.head { display: flex; gap: 3px; padding-left: 3px; height: 22px; }
.inrow { padding: 0 4px 0 3px; height: 9px; }
.inrow select { appearance: none; width: 100%; height: 9px; background: radial-gradient(circle at 38px 4px, #111 0 3px, #2a2a2a 4px); color: #666; font-size: 6px; line-height: 9px; padding-left: 2px; border-radius: 3px; display: block; }
.strip h2 { text-align: center; height: 13px; line-height: 13px; white-space: nowrap; overflow: hidden; color: #c2c2c2; }
.pans { height: 31px; background: #a0a9a9; display: flex; justify-content: center; gap: 4px; padding-top: 5px; }
.pan { display: flex; flex-direction: column; align-items: center; font-size: 6px; line-height: 8px; color: #4a5352; }
.pan .knob { margin: 0 0 1px; }
.sel .pans { background: #d2d4d4; }
.body { height: 160px; display: flex; background: linear-gradient(#9ea7a7, #929c9b); position: relative; }
.sel .body { background: #c8cbcc; }
.well { width: 32px; background: #262626; position: relative; overflow: hidden; flex: none; font-size: 6px; line-height: 8px; color: #777; }
.master .well { width: 54px; margin-left: 4px; }
.vol, .pk, .sc { position: absolute; white-space: nowrap; }
.vol { top: 2px; left: 0; right: 0; text-align: center; color: #777; }
.pk { top: 13px; left: 1px; font-size: 5px; font-weight: 600; color: #888; }
.master .pk { left: 6px; }
.master .pk2 { left: 24px; }
.bar { position: absolute; bottom: 0; width: 6px; background: #08ff98; }
.peak { position: absolute; height: 1px; width: 6px; background: #14c878; }
.bl { left: 1px; }
.br { left: 8px; }
.b1 { left: 2px; width: 5px; }
.b2 { left: 11px; width: 7px; }
.b3 { left: 22px; width: 7px; }
.b4 { left: 33px; width: 5px; }
.peak.b2, .peak.b3 { height: 2px; }
.led { position: absolute; top: 45px; width: 5px; height: 9px; background: #0b6b43; }
.l1 { left: 2px; }
.l2 { left: 35px; width: 3px; }
.sc { left: 0; width: 17px; text-align: center; font-size: 5px; font-weight: 600; color: #707070; }
.sc.lit { color: #e8fff4; text-shadow: 0 0 1px #063; }
.master .sc { left: 12px; }
.master .scl { left: 0; width: 12px; }
.master .scr { left: 30px; width: 12px; }
.vfader { appearance: none; writing-mode: vertical-lr; position: absolute; top: 14px; left: 17px; width: 13px; height: 146px; margin: 0; outline: 0; background: linear-gradient(#111, #111) 5px 1px / 2px 145px no-repeat, linear-gradient(#444, #444) 1px 45px / 11px 1px no-repeat; }
.master .vfader { left: 40px; }
.vfader::-webkit-slider-thumb { appearance: none; width: 11px; height: 24px; border-radius: 1px; background: linear-gradient(#555, #eee 8%, #aaa 16%, #555 34%, #333 38%, #666 50%, #222 58%, #777 64%, #aaa 78%, #fff 84%, #555 92%, #111); box-shadow: 0 0 0 1px #151515; }
.col { flex: 1; display: flex; flex-direction: column; align-items: center; }
.col .mb, .col .sb { width: 11px; height: 12px; margin-bottom: 4px; flex: none; line-height: 11px; }
.envb { width: 12px; height: 10px; background: #82908f; box-shadow: 0 0 0 1px #6e7877; flex: none; }
.trim { font-size: 6px; line-height: 7px; color: #5d6665; }
.phase { margin-top: 2px; }
.ifx { margin-top: 45px; opacity: 0.7; }
.inb { width: 11px; height: 19px; margin-top: 3px; background: #7f8988; color: #dfe3e2; font-size: 5px; line-height: 7px; font-weight: 700; display: flex; flex-direction: column; align-items: center; flex: none; border-radius: 1px 1px 5px 5px; }
.rec.big { position: absolute; left: 30px; top: 144px; width: 14px; height: 14px; margin: 0; background: radial-gradient(circle, #6e4236 0 2px, #b99c92 3px 4px, #7a4b3e 5px); box-shadow: 0 0 0 2px #222; }
.gear { position: absolute; left: 56px; top: 144px; }
</style>
